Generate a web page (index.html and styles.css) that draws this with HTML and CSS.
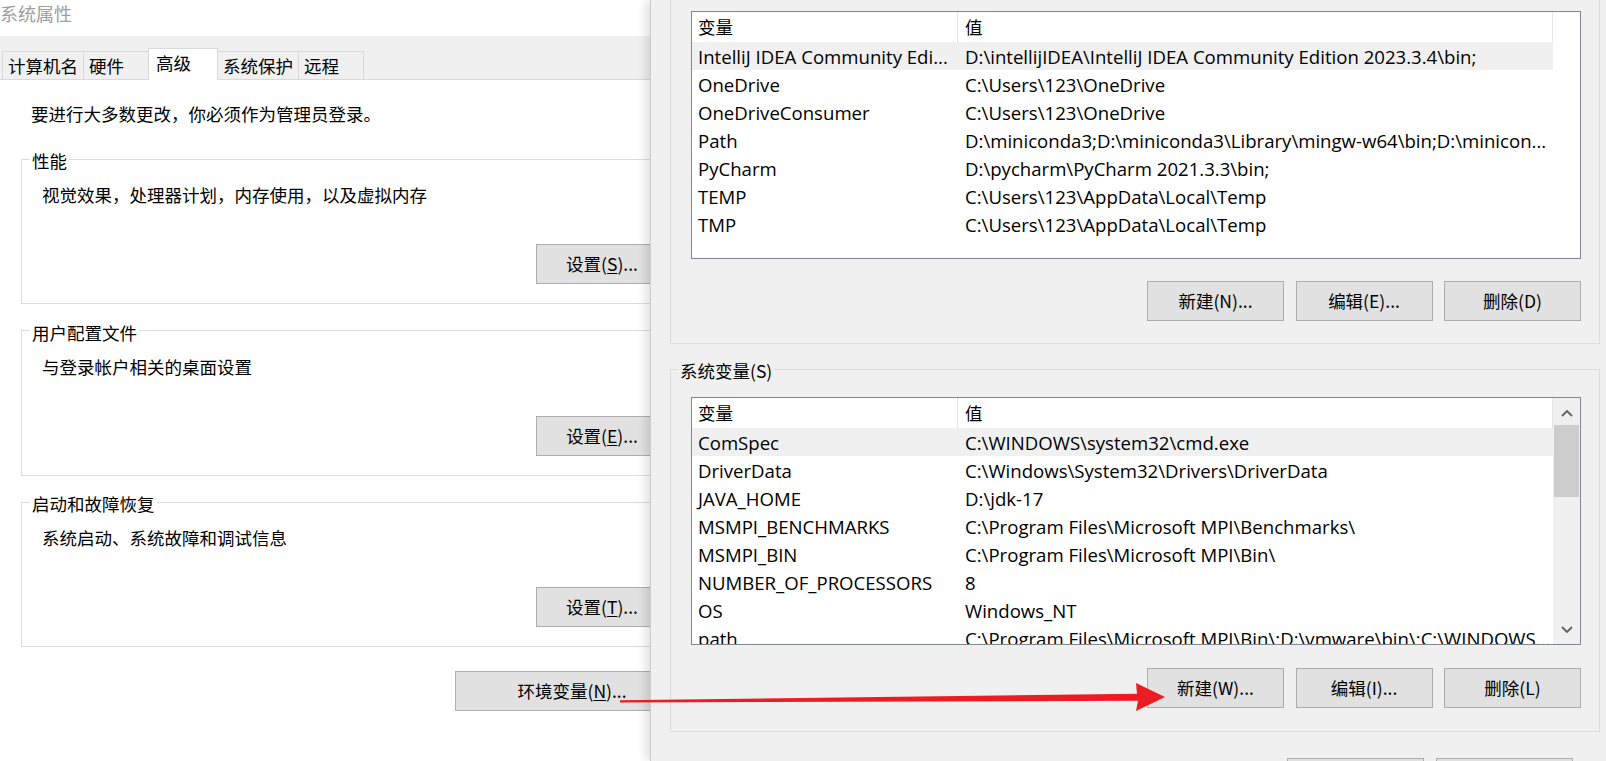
FILE: index.html
```html
<!DOCTYPE html>
<html lang="zh-CN">
<head>
<meta charset="utf-8">
<title>系统属性 - 环境变量</title>
<link rel="stylesheet" href="styles.css">
</head>
<body>
<div class="screen">
  <section class="sysprops">
    <div class="title">系统属性</div>
    <div class="tabbar">
      <div class="tab">计算机名</div>
      <div class="tab">硬件</div>
      <div class="tab tab-active">高级</div>
      <div class="tab">系统保护</div>
      <div class="tab">远程</div>
    </div>
    <div class="tabpage">
      <p class="notice">要进行大多数更改，你必须作为管理员登录。</p>
      <fieldset class="group">
        <legend>性能</legend>
        <p class="desc">视觉效果，处理器计划，内存使用，以及虚拟内存</p>
        <div class="group-actions"><button class="btn btn-settings">设置(<u>S</u>)...</button></div>
      </fieldset>
      <fieldset class="group">
        <legend>用户配置文件</legend>
        <p class="desc">与登录帐户相关的桌面设置</p>
        <div class="group-actions"><button class="btn btn-settings">设置(<u>E</u>)...</button></div>
      </fieldset>
      <fieldset class="group">
        <legend>启动和故障恢复</legend>
        <p class="desc">系统启动、系统故障和调试信息</p>
        <div class="group-actions"><button class="btn btn-settings">设置(<u>T</u>)...</button></div>
      </fieldset>
      <div class="page-actions"><button class="btn btn-env">环境变量(<u>N</u>)...</button></div>
    </div>
  </section>

  <section class="envvars">
    <div class="vgroup vgroup-user">
      <div class="listview">
        <div class="lv-body">
          <div class="lv-head"><div class="lv-col lv-name">变量</div><div class="lv-col lv-value">值</div></div>
          <div class="lv-row lv-row-sel"><div class="lv-col lv-name">IntelliJ IDEA Community Edi...</div><div class="lv-col lv-value">D:\intellijIDEA\IntelliJ IDEA Community Edition 2023.3.4\bin;</div></div>
          <div class="lv-row"><div class="lv-col lv-name">OneDrive</div><div class="lv-col lv-value">C:\Users\123\OneDrive</div></div>
          <div class="lv-row"><div class="lv-col lv-name">OneDriveConsumer</div><div class="lv-col lv-value">C:\Users\123\OneDrive</div></div>
          <div class="lv-row"><div class="lv-col lv-name">Path</div><div class="lv-col lv-value">D:\miniconda3;D:\miniconda3\Library\mingw-w64\bin;D:\minicon...</div></div>
          <div class="lv-row"><div class="lv-col lv-name">PyCharm</div><div class="lv-col lv-value">D:\pycharm\PyCharm 2021.3.3\bin;</div></div>
          <div class="lv-row"><div class="lv-col lv-name">TEMP</div><div class="lv-col lv-value">C:\Users\123\AppData\Local\Temp</div></div>
          <div class="lv-row"><div class="lv-col lv-name">TMP</div><div class="lv-col lv-value">C:\Users\123\AppData\Local\Temp</div></div>
        </div>
      </div>
      <div class="actions">
        <button class="btn btn-dlg">新建(N)...</button>
        <button class="btn btn-dlg">编辑(E)...</button>
        <button class="btn btn-dlg">删除(D)</button>
      </div>
    </div>

    <fieldset class="vgroup vgroup-sys">
      <legend>系统变量(S)</legend>
      <div class="listview">
        <div class="lv-body">
          <div class="lv-head"><div class="lv-col lv-name">变量</div><div class="lv-col lv-value">值</div></div>
          <div class="lv-row lv-row-sel"><div class="lv-col lv-name">ComSpec</div><div class="lv-col lv-value">C:\WINDOWS\system32\cmd.exe</div></div>
          <div class="lv-row"><div class="lv-col lv-name">DriverData</div><div class="lv-col lv-value">C:\Windows\System32\Drivers\DriverData</div></div>
          <div class="lv-row"><div class="lv-col lv-name">JAVA_HOME</div><div class="lv-col lv-value">D:\jdk-17</div></div>
          <div class="lv-row"><div class="lv-col lv-name">MSMPI_BENCHMARKS</div><div class="lv-col lv-value">C:\Program Files\Microsoft MPI\Benchmarks\</div></div>
          <div class="lv-row"><div class="lv-col lv-name">MSMPI_BIN</div><div class="lv-col lv-value">C:\Program Files\Microsoft MPI\Bin\</div></div>
          <div class="lv-row"><div class="lv-col lv-name">NUMBER_OF_PROCESSORS</div><div class="lv-col lv-value">8</div></div>
          <div class="lv-row"><div class="lv-col lv-name">OS</div><div class="lv-col lv-value">Windows_NT</div></div>
          <div class="lv-row"><div class="lv-col lv-name">path</div><div class="lv-col lv-value">C:\Program Files\Microsoft MPI\Bin\;D:\vmware\bin\;C:\WINDOWS...</div></div>
        </div>
        <div class="scrollbar">
          <div class="sb-btn"><svg width="27" height="27" viewBox="0 0 27 27"><polyline points="9,18 14,13 19,18" fill="none" stroke="#606060" stroke-width="1.8"/></svg></div>
          <div class="sb-track"><div class="sb-thumb"></div></div>
          <div class="sb-btn"><svg width="27" height="27" viewBox="0 0 27 27"><polyline points="9,10 14,15 19,10" fill="none" stroke="#606060" stroke-width="1.8"/></svg></div>
        </div>
      </div>
      <div class="actions">
        <button class="btn btn-dlg">新建(W)...</button>
        <button class="btn btn-dlg">编辑(I)...</button>
        <button class="btn btn-dlg">删除(L)</button>
      </div>
    </fieldset>

    <div class="dialog-actions">
      <button class="btn btn-dlg">确定</button>
      <button class="btn btn-dlg">取消</button>
    </div>
  </section>

  <svg class="annotation" width="1606" height="761" viewBox="0 0 1606 761">
    <polygon points="620,700.2 1137,693.8 1136,683 1165,697 1136,711 1138,700.8 620,702.6" fill="#ec1c24"/>
  </svg>
</div>
</body>
</html>
```

FILE: styles.css
```css
* { box-sizing: border-box; }

html, body {
  margin: 0;
  padding: 0;
}

body {
  width: 1606px;
  height: 761px;
  overflow: hidden;
  background: #ffffff;
  color: #000000;
  font-family: "Noto Sans CJK SC", "Open Sans", sans-serif;
  font-size: 17.5px;
}

.screen {
  position: relative;
  display: flex;
  width: 1606px;
  height: 761px;
  overflow: hidden;
}

/* ---------- left window: 系统属性 ---------- */
.sysprops {
  flex: none;
  width: 650px;
  height: 761px;
  overflow: hidden;
  background: #ffffff;
  display: flex;
  flex-direction: column;
}

.title {
  flex: none;
  height: 36px;
  line-height: 27px;
  font-size: 18px;
  color: #9d9d9d;
  white-space: nowrap;
}

.tabbar {
  flex: none;
  height: 44px;
  background: #f0f0f0;
  border-bottom: 1px solid #d9d9d9;
  display: flex;
  align-items: flex-end;
  padding-left: 2px;
}

.tab {
  flex: none;
  height: 28px;
  min-width: 66px;
  margin-left: -1px;
  padding: 0 5px;
  border: 1px solid #d9d9d9;
  border-bottom: none;
  line-height: 27px;
  white-space: nowrap;
  background: #f0f0f0;
}

.tab:first-child { margin-left: 0; }

.tab-active {
  height: 32px;
  min-width: 70px;
  margin-bottom: -1px;
  padding-left: 7px;
  background: #ffffff;
  line-height: 28px;
  position: relative;
  z-index: 1;
}

.tabpage {
  flex: none;
  width: 700px;
  padding: 22px 0 0 21px;
}

.notice {
  margin: 0 0 0 10px;
  line-height: 24px;
  white-space: nowrap;
}

.group {
  width: 668px;
  min-width: 0;
  margin: 21px 0 0 0;
  padding: 0 20px 19px 8px;
  border: 1px solid #dcdcdc;
}

.group + .group { margin-top: 14.5px; }

.group legend {
  padding: 4px 2px 0;
  line-height: 20px;
}

.desc {
  margin: 12px 0 0 12px;
  line-height: 24px;
  white-space: nowrap;
}

.group-actions {
  display: flex;
  justify-content: flex-end;
  margin-top: 37px;
}

.page-actions {
  width: 668px;
  display: flex;
  justify-content: flex-end;
  margin-top: 24px;
}

.btn {
  height: 40px;
  padding: 0;
  border: 1px solid #adadad;
  background: #e1e1e1;
  color: #000000;
  font-family: inherit;
  font-size: 17.5px;
  line-height: 38px;
  text-align: center;
  white-space: nowrap;
}

.btn u { text-underline-offset: 2px; }

.btn-settings { width: 132px; }
.btn-env { width: 234px; }
.btn-dlg { width: 137px; }

/* ---------- right window: 环境变量 ---------- */
.envvars {
  flex: none;
  width: 956px;
  height: 761px;
  background: #f0f0f0;
  border-left: 1px solid #cccccc;
  box-shadow: -4px 0 9px rgba(0, 0, 0, 0.13);
  padding-left: 19px;
}

.vgroup-user {
  width: 930px;
  border: 1px solid #dcdcdc;
  border-top: none;
  padding: 11px 18px 22px 20px;
}

.vgroup-sys {
  width: 930px;
  min-width: 0;
  margin: 14px 0 0 0;
  border: 1px solid #dcdcdc;
  padding: 17px 18px 23px 7px;
}

.vgroup-sys legend {
  padding: 4px 2px 0;
  line-height: 18px;
}

.vgroup-sys .listview { margin-left: 13px; }

.listview {
  width: 890px;
  height: 248px;
  border: 1px solid #828790;
  background: #ffffff;
  display: flex;
  overflow: hidden;
}

.lv-body {
  flex: 1;
  min-width: 0;
}

.lv-head {
  display: flex;
  height: 30px;
  line-height: 30px;
}

.lv-head .lv-col { border-right: 1px solid #e5e5e5; }

.lv-row {
  display: flex;
  height: 27.95px;
  font-family: "Open Sans", "Noto Sans CJK SC", sans-serif;
  font-size: 18.6px;
}

.lv-row .lv-col {
  padding-top: 2px;
  line-height: 26.5px;
}

.lv-col {
  flex: none;
  overflow: hidden;
  white-space: nowrap;
}

.lv-name { width: 266px; padding-left: 6px; }
.lv-value { width: 595px; padding-left: 7px; }

.lv-row-sel .lv-col { background: #f0f0f0; }

.scrollbar {
  flex: none;
  width: 27px;
  background: #f0f0f0;
  display: flex;
  flex-direction: column;
}

.sb-btn {
  flex: none;
  height: 27px;
}

.sb-btn svg { display: block; }

.sb-track { flex: 1; }

.sb-thumb {
  height: 72px;
  margin: 0 1px;
  background: #cdcdcd;
}

.actions {
  display: flex;
  justify-content: flex-end;
  gap: 11.5px;
  margin-top: 22px;
}

.vgroup-sys .actions { margin-top: 23px; }

.dialog-actions {
  display: flex;
  justify-content: flex-end;
  gap: 12px;
  margin-top: 26px;
  padding-right: 33px;
}

/* ---------- annotation arrow ---------- */
.annotation {
  position: absolute;
  left: 0;
  top: 0;
  pointer-events: none;
  z-index: 2;
}
```
